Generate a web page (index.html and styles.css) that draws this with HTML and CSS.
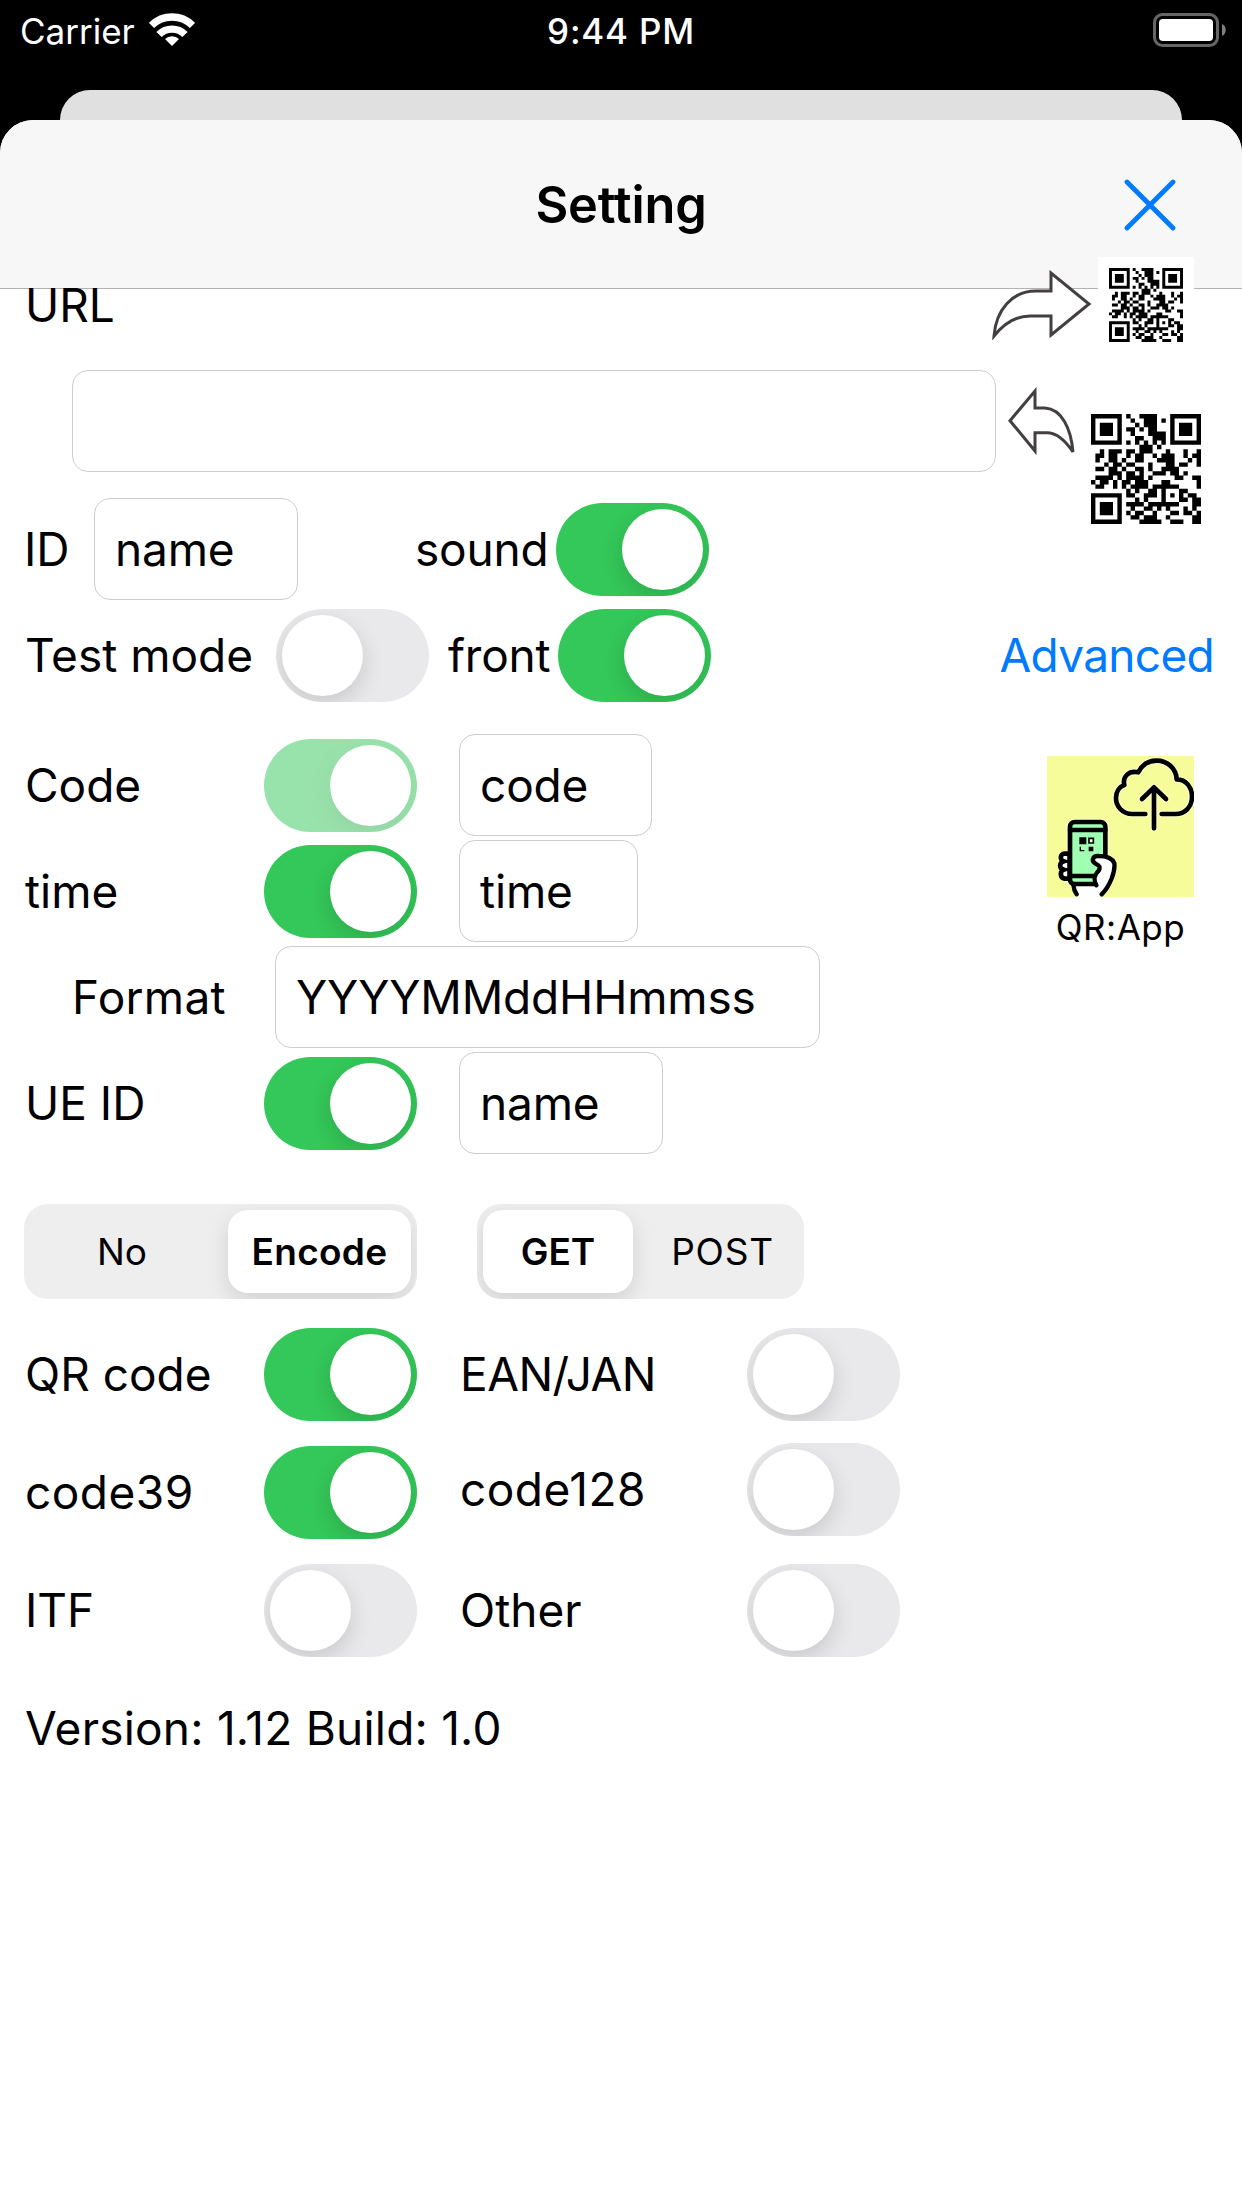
FILE: index.html
```
<!DOCTYPE html>
<html lang="en">
<head>
<meta charset="utf-8">
<title>Setting</title>
<link rel="stylesheet" href="styles.css">
</head>
<body>
<header class="status">
  <div class="carrier"><span>Carrier</span>
    <svg class="wifi" viewBox="0 0 46 34"><g fill="none" stroke="#fff"><path d="M2.5 12.5a29 29 0 0 1 41 0" stroke-width="7.4"/><path d="M10 21.5a18.4 18.4 0 0 1 26 0" stroke-width="7.4"/></g><path d="M23 33l-7-7a10 10 0 0 1 14 0z" fill="#fff"/></svg>
  </div>
  <div class="clock">9:44 PM</div>
  <svg class="battery" viewBox="0 0 74 34"><rect x="1.5" y="1.5" width="63" height="31" rx="8" fill="none" stroke="#666" stroke-width="3"/><rect x="6" y="6" width="54" height="22" rx="4" fill="#fff"/><path d="M69 11c5 2 5 10 0 12z" fill="#808080"/></svg>
</header>
<div class="back-card"></div>
<main class="sheet">
  <div class="nav">
    <h1>Setting</h1>
    <svg class="close" viewBox="0 0 52 52"><path d="M3 3L49 49M49 3L3 49" stroke="#007aff" stroke-width="4.8" stroke-linecap="round"/></svg>
  </div>
  <section class="url-head">
    <span class="label">URL</span>
    <div class="share">
      <svg class="arrow-out" viewBox="0 0 100 70"><path d="M2 66C4 40 20 21 44 21H59V3L97 34L59 65V46H38C22 46 10 56 2 66Z"/></svg>
      <div class="qr-tile"><svg class="qr" viewBox="0 0 25 25"></svg></div>
    </div>
  </section>
  <section class="url-row">
    <div class="field url-field"></div>
    <svg class="arrow-in" viewBox="0 0 70 69"><path d="M3 33.7L28 4V21H38C55 22 64 42 66 65C58 53 50 45.7 40 45.7H28V64Z"/></svg>
    <svg class="qr qr-large" viewBox="0 0 25 25"></svg>
  </section>
  <section class="row id-row">
    <span class="label">ID</span>
    <div class="field id-field">name</div>
    <span class="label sound">sound</span><i class="toggle on"></i>
  </section>
  <section class="row mode-row">
    <span class="label test">Test mode</span><i class="toggle"></i>
    <span class="label front">front</span><i class="toggle on"></i>
    <a class="advanced">Advanced</a>
  </section>
  <section class="params">
    <div class="form">
      <div class="row"><span class="label key">Code</span><i class="toggle on disabled"></i><div class="field code-field">code</div></div>
      <div class="row"><span class="label key">time</span><i class="toggle on"></i><div class="field time-field">time</div></div>
      <div class="row format"><span class="label">Format</span><div class="field format-field">YYYYMMddHHmmss</div></div>
      <div class="row"><span class="label key">UE ID</span><i class="toggle on"></i><div class="field name-field">name</div></div>
    </div>
    <aside class="app">
      <svg class="app-icon" viewBox="0 0 441 423">
        <rect width="441" height="423" fill="#f7fc9b"/>
        <g fill="none" stroke-linecap="round" stroke-linejoin="round">
          <g stroke="#fff" stroke-opacity=".6" stroke-width="20"><path d="M295 174H256C225 174 207 150 207 126C207 107 217 92 232 87C226 62 246 42 274 49C285 26 305 14 329 14C362 14 388 38 389 70C418 70 435 95 435 122C435 152 415 174 385 174H344"/><path d="M321 217V96M285 129L321 94L357 129"/><rect x="69" y="198" width="106" height="187" rx="14"/></g>
          <g stroke="#000" stroke-width="14"><path d="M295 174H256C225 174 207 150 207 126C207 107 217 92 232 87C226 62 246 42 274 49C285 26 305 14 329 14C362 14 388 38 389 70C418 70 435 95 435 122C435 152 415 174 385 174H344"/><path d="M321 217V96M285 129L321 94L357 129"/>
          <path fill="#fff" d="M68 293H53C38 293 38 315 51 316C36 317 35 340 51 341C38 343 38 366 53 368H68Z"/><path d="M51 316H68M51 341H68" stroke-width="10"/>
          <rect x="69" y="198" width="106" height="187" rx="14" fill="#9fffb2"/><path d="M69 222H175M69 360H150"/></g>
          <path d="M79 384L89 423H160L178 385L150 386Z" fill="#fff"/>
          <path fill="#fff" d="M164 415C190 390 205 345 202 322C195 304 175 300 155 300C136 299 132 315 146 323C160 329 159 334 156 343C142 357 138 369 148 388" stroke="#000" stroke-width="13"/>
          <path d="M79 384H146M79 386C80 400 84 408 89 415" stroke="#000" stroke-width="13"/>
        </g>
        <path d="M97 244h21v21H97zM125 272h14v14h-14z"/><path d="M126 247h13v14h-13z" fill="#fff" stroke="#000" stroke-width="5"/><path d="M100 272v12h12" fill="none" stroke="#000" stroke-width="4"/>
      </svg>
      <span>QR:App</span>
    </aside>
  </section>
  <section class="segments">
    <div class="segment encode"><span>No</span><b>Encode</b></div>
    <div class="segment method"><b>GET</b><span>POST</span></div>
  </section>
  <section class="types">
    <span class="label">QR code</span><i class="toggle on"></i><span class="label ean">EAN/JAN</span><i class="toggle"></i>
    <span class="label digits">code39</span><i class="toggle on"></i><span class="label digits raised">code128</span><i class="toggle raised"></i>
    <span class="label">ITF</span><i class="toggle"></i><span class="label">Other</span><i class="toggle"></i>
  </section>
  <p class="label version">Version: 1.12 Build: 1.0</p>
</main>
<script src="qr.js"></script>
</body>
</html>
```
FILE: styles.css
```
* { box-sizing: border-box; }
body { margin: 0; background: #000; color: #000; font-family: Inter, "Liberation Sans", sans-serif; font-size: 46px; line-height: 1; }
svg { display: block; flex: none; }
.status { display: grid; grid-template-columns: 1fr auto 1fr; align-items: start; height: 90px; padding: 13px 15px 0 20px; color: #fff; font-size: 35px; }
.carrier { display: flex; gap: 14px; }
.carrier span { line-height: 37px; }
.wifi { width: 46px; height: 34px; }
.clock { margin-right: 5px; line-height: 37px; font-weight: 500; letter-spacing: .8px; }
.battery { width: 74px; height: 34px; justify-self: end; }
.back-card { height: 30px; margin: 0 60px; background: #e0e0e0; border-radius: 30px 30px 0 0; }
.sheet { height: 2088px; background: #fff; border-radius: 33px 33px 0 0; overflow: hidden; }
.nav { display: grid; grid-template-columns: 1fr auto 1fr; align-items: center; height: 169px; padding: 0 66px; background: #f7f7f7; border-bottom: 1px solid #b2b2b2; }
h1 { grid-column: 2; margin: 2px 0 0; font-size: 50.5px; font-weight: 600; letter-spacing: -.2px; }
.close { width: 52px; height: 52px; margin-top: 1px; justify-self: end; }
.label { white-space: nowrap; }
.url-head { display: flex; position: relative; justify-content: space-between; align-items: center; height: 96px; margin-top: -32px; padding: 0 48px 0 25px; }
.share { display: flex; align-items: center; gap: 6px; }
.arrow-out { width: 100px; height: 70px; }
.arrow-out path, .arrow-in path { fill: #fff; stroke: #433f40; stroke-width: 3; }
.qr-tile { width: 96px; height: 96px; padding: 11px; background: #fff; }
.qr { width: 74px; height: 74px; }
.url-row { display: flex; height: 102px; margin: 17px 0 26px 72px; }
.field { flex: none; display: flex; align-items: center; height: 102px; padding: 0 20px; border: 1px solid #cdcdcd; border-radius: 16px; background: #fff; letter-spacing: -.15px; }
.url-field { width: 924px; }
.arrow-in { width: 70px; height: 69px; margin: 17px 14px 0 11px; }
.qr-large { width: 110px; height: 110px; margin-top: 44px; }
.row { display: flex; align-items: center; height: 102px; }
.id-row, .mode-row { padding-left: 24px; }
.id-row .label:first-child { width: 70px; }
.id-field { width: 204px; margin-right: 117px; }
.sound { width: 141px; letter-spacing: -.2px; }
.mode-row { margin-top: 4px; padding-right: 28px; }
.test { width: 252px; padding-left: 1px; }
.front { width: 110px; margin-left: 19px; letter-spacing: -.2px; }
.advanced { margin-left: auto; color: #007aff; letter-spacing: -.7px; }
.toggle { flex: none; width: 153px; height: 93px; padding: 6px; border-radius: 47px; background: #e9e9eb; overflow: hidden; }
.toggle::after { content: ""; display: block; width: 81px; height: 81px; border-radius: 50%; background: #fff; box-shadow: 0 8px 22px rgba(0,0,0,.14); }
.toggle.on { background: #34c759; }
.toggle.on::after { margin-left: auto; }
.toggle.disabled { opacity: .5; }
.params { display: flex; justify-content: space-between; margin-top: 28px; padding: 0 48px 0 24px; }
.form { display: flex; flex-direction: column; gap: 4px; }
.key { width: 240px; padding-left: 1px; }
.form .toggle { margin-right: 42px; }
.code-field { width: 193px; }
.time-field { width: 179px; }
.name-field { width: 204px; }
.format { padding-left: 48px; }
.format .label { width: 203px; letter-spacing: .3px; }
.format-field { width: 545px; }
.app { display: flex; flex-direction: column; align-items: center; gap: 13px; padding-top: 22px; font-size: 35px; }
.app span { letter-spacing: .5px; }
.app-icon { width: 147px; height: 141px; }
.segments { display: flex; gap: 60px; margin: 50px 0 0 24px; }
.segment { display: grid; height: 95px; padding: 6px; border-radius: 24px; background: #eee; overflow: hidden; font-size: 37px; }
.segment > * { display: grid; place-items: center; }
.segment b { border-radius: 20px; background: #fff; font-weight: 600; box-shadow: 0 8px 22px rgba(0,0,0,.12); }
.encode { width: 393px; grid-template-columns: 198px 183px; }
.encode span { padding-right: 14px; }
.encode b { letter-spacing: .3px; }
.method { width: 327px; grid-template-columns: 150px 1fr; }
.method span { padding-left: 14px; letter-spacing: .8px; }
.types { display: grid; grid-template-columns: 240px 195px 288px 153px; grid-auto-rows: 93px; row-gap: 25px; align-items: center; margin: 29px 0 0 24px; }
.types .label { padding: 0 0 2px 1px; }
.ean { letter-spacing: -.5px; }
.digits { letter-spacing: .5px; }
.raised { transform: translateY(-3px); }
.version { margin: 48px 0 0 25px; letter-spacing: .22px; }
```
FILE: qr.js
```
const rows = [
  "1111111010011110001111111",
  "1000001001001110101000001",
  "1011101000101110001011101",
  "1011101011010110001011101",
  "1011101001000111101011101",
  "1000001000110011101000001",
  "1111111010101010101111111",
  "0000000000011101000000000",
  "0010111011011100010001001",
  "0110110010110010111001011",
  "0100110100110001111000101",
  "0001011011000100011011001",
  "0110110100110100111100000",
  "0000111011010011101101000",
  "0111101011110100000110011",
  "1011010110111000110000001",
  "0110010101111011111100001",
  "0000000010100110100011000",
  "1111111011001110101010110",
  "1000001000101000100011011",
  "1011101011110111111100011",
  "1011101001001101010001010",
  "1011101010110010001101101",
  "1000001001101110010000011",
  "1111111000011111001110011"
];
let d = "";
rows.forEach((row, y) => {
  for (const run of row.matchAll(/1+/g)) d += `M${run.index} ${y}h${run[0].length}v1h-${run[0].length}z`;
});
document.querySelectorAll(".qr").forEach(svg => {
  const path = document.createElementNS("http://www.w3.org/2000/svg", "path");
  path.setAttribute("d", d);
  svg.append(path);
});
```
